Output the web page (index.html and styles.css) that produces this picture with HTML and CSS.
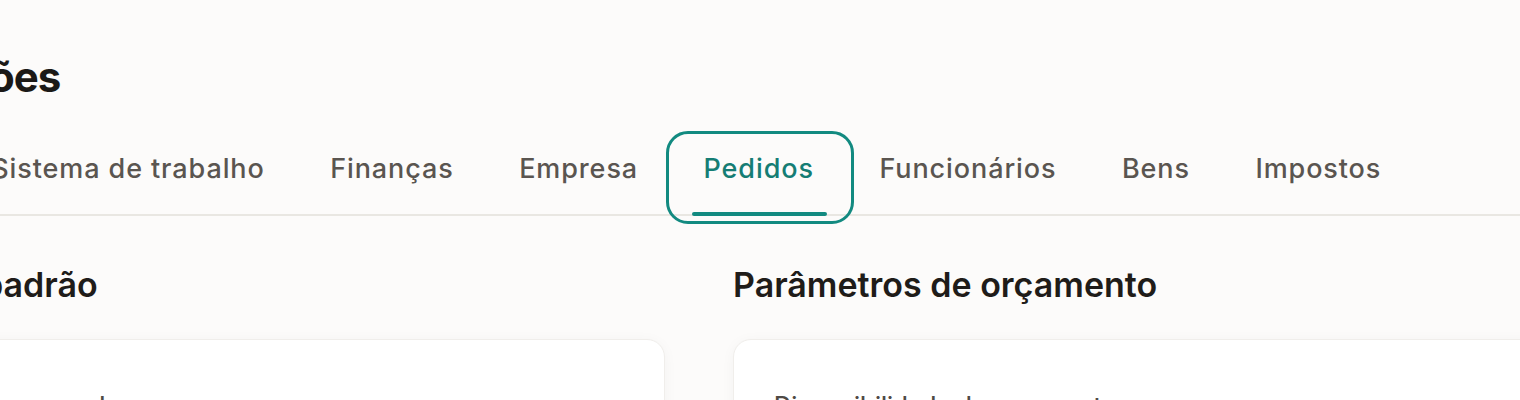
FILE: index.html
```html
<!DOCTYPE html>
<html lang="pt">
<head>
<meta charset="utf-8">
<title>Definições</title>
<link rel="stylesheet" href="styles.css">
</head>
<body>
<main class="page">
  <h1 class="title">Definições</h1>
  <nav class="tabs">
    <button class="tab">Geral</button>
    <button class="tab">Sistema de trabalho</button>
    <button class="tab">Finanças</button>
    <button class="tab">Empresa</button>
    <button class="tab tab-active">Pedidos</button>
    <button class="tab">Funcionários</button>
    <button class="tab">Bens</button>
    <button class="tab">Impostos</button>
  </nav>
  <div class="sections">
    <section class="section">
      <h2 class="section-title">Valores padrão</h2>
      <div class="card">
        <p class="field-label">Tipo de encomenda</p>
      </div>
    </section>
    <section class="section">
      <h2 class="section-title">Parâmetros de orçamento</h2>
      <div class="card">
        <p class="field-label">Disponibilidade do orçamento</p>
      </div>
    </section>
  </div>
</main>
</body>
</html>
```

FILE: styles.css
```css
html, body {
  margin: 0;
  padding: 0;
  background: #fcfbfa;
  overflow: hidden;
}
body {
  font-family: Inter, "Liberation Sans", sans-serif;
  color: #1f1c19;
}
.page {
  margin-left: -150px;
  width: 1698px;
  padding-top: 52px;
}
.title {
  margin: 0;
  font-size: 42px;
  line-height: 50px;
  font-weight: 700;
  letter-spacing: -1px;
  color: #1b1917;
}
.tabs {
  display: flex;
  margin-top: 34px;
  margin-left: -30px;
  padding-left: 0;
  border-bottom: 2px solid #e9e7e2;
}
.tab {
  position: relative;
  background: none;
  border: none;
  margin: 0 0 -2px 0;
  padding: 16px 32.75px 31px;
  font-family: Inter, "Liberation Sans", sans-serif;
  font-size: 27px;
  line-height: 33px;
  font-weight: 500;
  letter-spacing: 0.9px;
  color: #5a5550;
  cursor: pointer;
  white-space: nowrap;
}
.tab-active {
  color: #157d74;
}
.tab-active::before {
  content: "";
  position: absolute;
  top: -5px;
  bottom: -8px;
  left: -5px;
  right: -7px;
  border: 3px solid #128a80;
  border-radius: 22px;
}
.tab-active::after {
  content: "";
  position: absolute;
  left: 21px;
  right: 20px;
  bottom: 0;
  height: 4px;
  border-radius: 2px;
  background: #128a80;
}
.sections {
  display: grid;
  grid-template-columns: 1fr 1fr;
  column-gap: 68px;
  margin-top: 48px;
}
.section-title {
  margin: 0;
  font-size: 34px;
  line-height: 41px;
  font-weight: 600;
  letter-spacing: 0;
  color: #1f1c19;
}
.card {
  margin-top: 34px;
  min-height: 300px;
  background: #ffffff;
  border: 1px solid #f0eeeb;
  border-radius: 18px;
  box-shadow: 0 2px 14px rgba(60, 50, 40, 0.04);
  padding: 51px 40px 48px;
}
.field-label {
  margin: 0;
  font-size: 24px;
  line-height: 29px;
  font-weight: 500;
  color: #4f4a45;
}
```
